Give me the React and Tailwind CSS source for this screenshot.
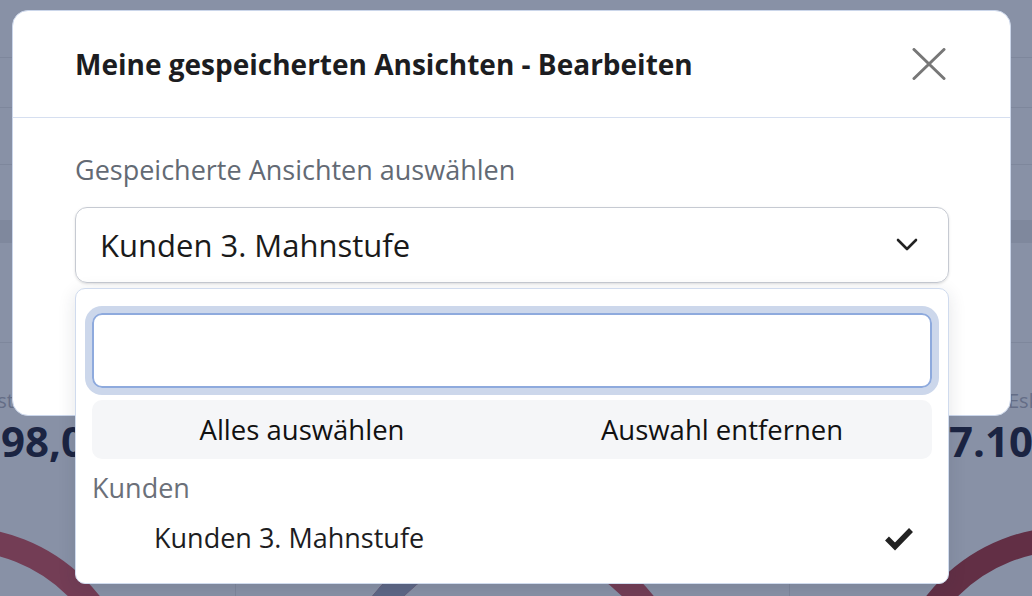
import React from 'react'

function Donut({ color, blue }) {
    // ring drawn with pathLength 360 so the dash values are degrees
    return (
        <svg width="380" height="380" viewBox="0 0 380 380" className="mx-auto shrink-0">
            <circle cx="190" cy="190" r="166" fill="none" stroke={color} strokeWidth="24" />
            {blue && (
                <circle
                    cx="190"
                    cy="190"
                    r="166"
                    fill="none"
                    stroke="#5d6786"
                    strokeWidth="24"
                    pathLength="360"
                    strokeDasharray="90 270"
                    strokeDashoffset="-180"
                />
            )}
        </svg>
    )
}

function Dashboard() {
    return (
        <div className="flex flex-col">
            <div className="h-[58px] border-b border-[#7e879c]" />
            <div className="h-[50px] border-b border-[#7e879c]" />
            <div className="h-[57px] border-b border-[#7e879c]" />
            <div className="h-[55px]" />
            <div className="h-[23px] bg-[#7f889d]" />
            <div className="h-[100px] border-b border-[#7e879c]" />

            {/* stat labels + values */}
            <div className="pt-[44px] flex justify-between text-[20px] leading-[28px] text-[#646d86] whitespace-nowrap">
                <div className="-ml-[86px] w-[100px] text-right shrink-0">Verlust</div>
                <div className="-mr-[78px] w-[102px] shrink-0">Eskaliert</div>
            </div>
            <div className="mt-[2px] flex justify-between text-[42px] leading-[48px] font-bold text-[#1b2442] whitespace-nowrap">
                <div className="-ml-[59px] shrink-0">2.398,00 €</div>
                <div className="-mr-[120px] shrink-0">47.100,00 €</div>
            </div>

            {/* charts */}
            <div className="mt-[50px] flex -ml-[318px]">
                <div className="w-[554px] shrink-0 border-r border-[#7d869b]">
                    <Donut color="#733d55" />
                </div>
                <div className="w-[554px] shrink-0 border-r border-[#7d869b]">
                    <Donut color="#733d55" blue />
                </div>
                <div className="w-[554px] shrink-0">
                    <Donut color="#622f45" />
                </div>
            </div>
        </div>
    )
}

export default function App() {
    return (
        <div className="relative h-[596px] w-[1032px] overflow-hidden bg-[#8891a6] font-['Open_Sans',sans-serif]">
            <Dashboard />

            {/* modal layer */}
            <div className="absolute inset-0 pt-[10px] pl-[12px]">
                <div className="relative w-[999px] h-[406px] rounded-[16px] bg-white border border-[#cbd6ea]">
                    <div className="h-[107px] flex items-center justify-between pl-[62px] pr-[64px] border-b border-[#d6dff0]">
                        <h2 className="text-[28px] font-bold text-[#1c1d21] whitespace-nowrap">
                            Meine gespeicherten Ansichten - Bearbeiten
                        </h2>
                        <svg width="34" height="32" viewBox="0 0 34 32">
                            <path d="M2 1.5 L32 30.5 M32 1.5 L2 30.5" stroke="#777" strokeWidth="3" strokeLinecap="round" />
                        </svg>
                    </div>

                    <div className="pl-[62px] pr-[61px] pt-[36px]">
                        <label className="block text-[27px] leading-[32px] text-[#636a74]">
                            Gespeicherte Ansichten auswählen
                        </label>
                        <div className="relative mt-[21px]">
                            <div className="h-[76px] rounded-[12px] border border-[#c6cad2] shadow-sm flex items-center justify-between pl-[24px] pr-[30px]">
                                <span className="text-[31px] text-[#1a1a1a]">Kunden 3. Mahnstufe</span>
                                <svg width="22" height="14" viewBox="0 0 22 14">
                                    <path d="M2 2 L11 11 L20 2" fill="none" stroke="#222" strokeWidth="2.6" strokeLinecap="round" strokeLinejoin="round" />
                                </svg>
                            </div>

                            {/* open dropdown */}
                            <div className="absolute left-0 right-0 top-[81px] h-[296px] rounded-[10px] border border-[#d0dbee] bg-white shadow-[0_4px_18px_rgba(30,40,60,0.12)] px-4 pt-6 z-10">
                                <input
                                    type="text"
                                    className="block w-full h-[75px] rounded-[10px] border-2 border-[#8eaadd] ring-[7px] ring-[#ccd7eb] outline-none px-4 text-[26px]"
                                />
                                <div className="mt-3 h-[59px] rounded-[10px] bg-[#f5f6f8] flex items-center text-[27.5px] text-[#111]">
                                    <button className="flex-1 text-center">Alles auswählen</button>
                                    <button className="flex-1 text-center">Auswahl entfernen</button>
                                </div>
                                <div className="mt-[13px] text-[27px] leading-[32px] text-[#6b7079]">Kunden</div>
                                <div className="mt-[17px] h-[34px] flex items-center justify-between pl-[62px] pr-[18px]">
                                    <span className="text-[27px] text-[#1d1d1f]">Kunden 3. Mahnstufe</span>
                                    <svg width="30" height="26" viewBox="0 0 30 26">
                                        <path d="M3 13.5 L11 21.5 L27 5" fill="none" stroke="#222" strokeWidth="5.5" />
                                    </svg>
                                </div>
                            </div>
                        </div>
                    </div>
                </div>
            </div>
        </div>
    )
}
